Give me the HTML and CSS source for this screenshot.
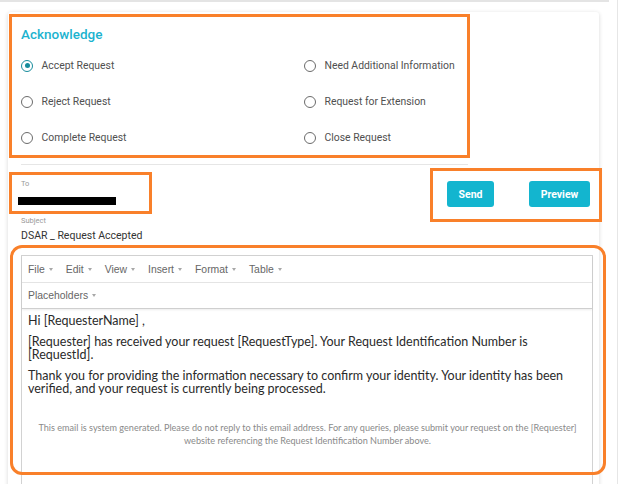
FILE: index.html
```html
<!DOCTYPE html>
<html lang="en">
<head>
<meta charset="utf-8">
<title>Acknowledge</title>
<link rel="stylesheet" href="styles.css">
</head>
<body>
<div class="frame">
  <div class="topline"></div>
  <div class="card">
    <section class="ack">
      <h2 class="ack-title">Acknowledge</h2>
      <div class="radio-grid">
        <label class="radio checked"><span class="ring"></span>Accept Request</label>
        <label class="radio"><span class="ring"></span>Need Additional Information</label>
        <label class="radio"><span class="ring"></span>Reject Request</label>
        <label class="radio"><span class="ring"></span>Request for Extension</label>
        <label class="radio"><span class="ring"></span>Complete Request</label>
        <label class="radio"><span class="ring"></span>Close Request</label>
      </div>
    </section>
    <section class="compose">
      <div class="fields">
        <div class="field-label">To</div>
        <div class="redacted"></div>
        <div class="field-label subject-label">Subject</div>
        <div class="field-value">DSAR _ Request Accepted</div>
      </div>
      <div class="actions">
        <button class="btn btn-send">Send</button>
        <button class="btn btn-preview">Preview</button>
      </div>
    </section>
    <section class="editor">
      <div class="menubar">
        <div class="menu-row">
          <span class="menu-item">File<span class="caret"></span></span>
          <span class="menu-item">Edit<span class="caret"></span></span>
          <span class="menu-item">View<span class="caret"></span></span>
          <span class="menu-item">Insert<span class="caret"></span></span>
          <span class="menu-item">Format<span class="caret"></span></span>
          <span class="menu-item">Table<span class="caret"></span></span>
        </div>
        <div class="menu-row">
          <span class="menu-item">Placeholders<span class="caret"></span></span>
        </div>
      </div>
      <div class="content">
        <p>Hi [RequesterName] ,</p>
        <p>[Requester] has received your request [RequestType]. Your Request Identification Number is [RequestId].</p>
        <p>Thank you for providing the information necessary to confirm your identity. Your identity has been verified, and your request is currently being processed.</p>
        <p class="footer-note">This email is system generated. Please do not reply to this email address. For any queries, please submit your request on the [Requester] website referencing the Request Identification Number above.</p>
      </div>
    </section>
  </div>
  <div class="mark mark-ack"></div>
  <div class="mark mark-to"></div>
  <div class="mark mark-actions"></div>
  <div class="mark mark-editor"></div>
</div>
</body>
</html>
```
FILE: styles.css
```css
* { box-sizing: border-box; }

html, body {
  margin: 0;
  padding: 0;
  background: #ffffff;
}

body {
  font-family: Roboto, "Liberation Sans", sans-serif;
  overflow: hidden;
}

.frame {
  position: relative;
  width: 618px;
  height: 484px;
  border-right: 1px solid #e6e6e6;
  overflow: hidden;
}

.topline {
  width: 609px;
  height: 2px;
  background: #e4e4e4;
}

.card {
  margin: 10px 0 0 8px;
  width: 591px;
  height: 520px;
  background: #fff;
  border-radius: 3px;
  box-shadow: 0 1px 4px rgba(0, 0, 0, 0.16);
  overflow: hidden;
}

/* Acknowledge section */
.ack {
  margin-left: 13px;
  width: 447px;
  padding-top: 13px;
  padding-bottom: 8.5px;
  border-bottom: 1px solid #e6e6e6;
}

.ack-title {
  margin: 0;
  font-size: 13.5px;
  line-height: 18px;
  font-weight: 500;
  color: #1cb3cf;
}

.radio-grid {
  margin-top: 4.5px;
  display: grid;
  grid-template-columns: 283px 1fr;
  grid-auto-rows: 36px;
}

.radio {
  display: flex;
  align-items: center;
  font-size: 10.4px;
  color: #505050;
}

.ring {
  width: 12px;
  height: 12px;
  border-radius: 50%;
  border: 1.5px solid #6b6b6b;
  margin-right: 8.5px;
  flex: none;
  display: flex;
  align-items: center;
  justify-content: center;
}

.radio.checked .ring {
  border-color: #178c9c;
}

.radio.checked .ring::after {
  content: "";
  width: 5px;
  height: 5px;
  border-radius: 50%;
  background: #178c9c;
}

/* Compose section */
.compose {
  display: flex;
  justify-content: space-between;
}

.fields {
  padding: 14px 0 0 13px;
}

.field-label {
  font-size: 7.5px;
  line-height: 10px;
  color: #9a9a9a;
}

.redacted {
  margin: 8px 0 0 -3px;
  width: 98px;
  height: 7.5px;
  background: #000;
}

.subject-label {
  margin-top: 11px;
}

.field-value {
  margin-top: 3.5px;
  font-size: 10.5px;
  line-height: 14px;
  color: #333;
}

.actions {
  display: flex;
  gap: 35px;
  margin: 16px 9px 0 0;
  align-self: flex-start;
}

.btn {
  height: 26px;
  border: none;
  border-radius: 3px;
  background: #13b5cf;
  color: #fff;
  font-family: Roboto, "Liberation Sans", sans-serif;
  font-weight: 700;
  font-size: 10.5px;
  padding: 0;
}

.btn-send { width: 47px; }
.btn-preview { width: 61px; }

/* Editor */
.editor {
  margin: 12px 6px 0 13px;
  border: 1px solid #d2d2d2;
  height: 240px;
}

.menubar {
  border-bottom: 1px solid #cfcfcf;
  box-shadow: 0 1px 2px rgba(0, 0, 0, 0.08);
}

.menu-row {
  height: 26px;
  display: flex;
  align-items: center;
  gap: 13px;
  padding-left: 6px;
  font-family: "Liberation Sans", Arial, sans-serif;
  font-size: 10.4px;
  color: #666;
}

.menu-row + .menu-row {
  border-top: 1px solid #e4e4e4;
}

.menu-item {
  display: inline-flex;
  align-items: center;
}

.caret {
  margin-left: 4px;
  width: 0;
  height: 0;
  border-left: 2.5px solid transparent;
  border-right: 2.5px solid transparent;
  border-top: 3px solid #a8a8a8;
}

.content {
  padding: 5px 7px 0 6px;
  font-family: Lato, "Liberation Sans", sans-serif;
  font-size: 12.5px;
  line-height: 13.3px;
  color: #2a2a2a;
}

.content p {
  margin: 0 0 7.5px;
}

.content .footer-note {
  margin: 26px -6px 0 -4px;
  text-align: center;
  font-size: 9.1px;
  line-height: 13px;
  color: #8a8a8a;
}

/* Orange annotation outlines (overlays) */
.mark {
  position: absolute;
  border: 3px solid #f9802a;
  pointer-events: none;
}

.mark-ack { left: 9px; top: 14px; width: 461px; height: 144px; }
.mark-to { left: 9px; top: 172px; width: 143px; height: 42px; }
.mark-actions { left: 430px; top: 168px; width: 172px; height: 54px; }
.mark-editor { left: 10px; top: 245px; width: 596px; height: 230px; border-radius: 12px; }
```
